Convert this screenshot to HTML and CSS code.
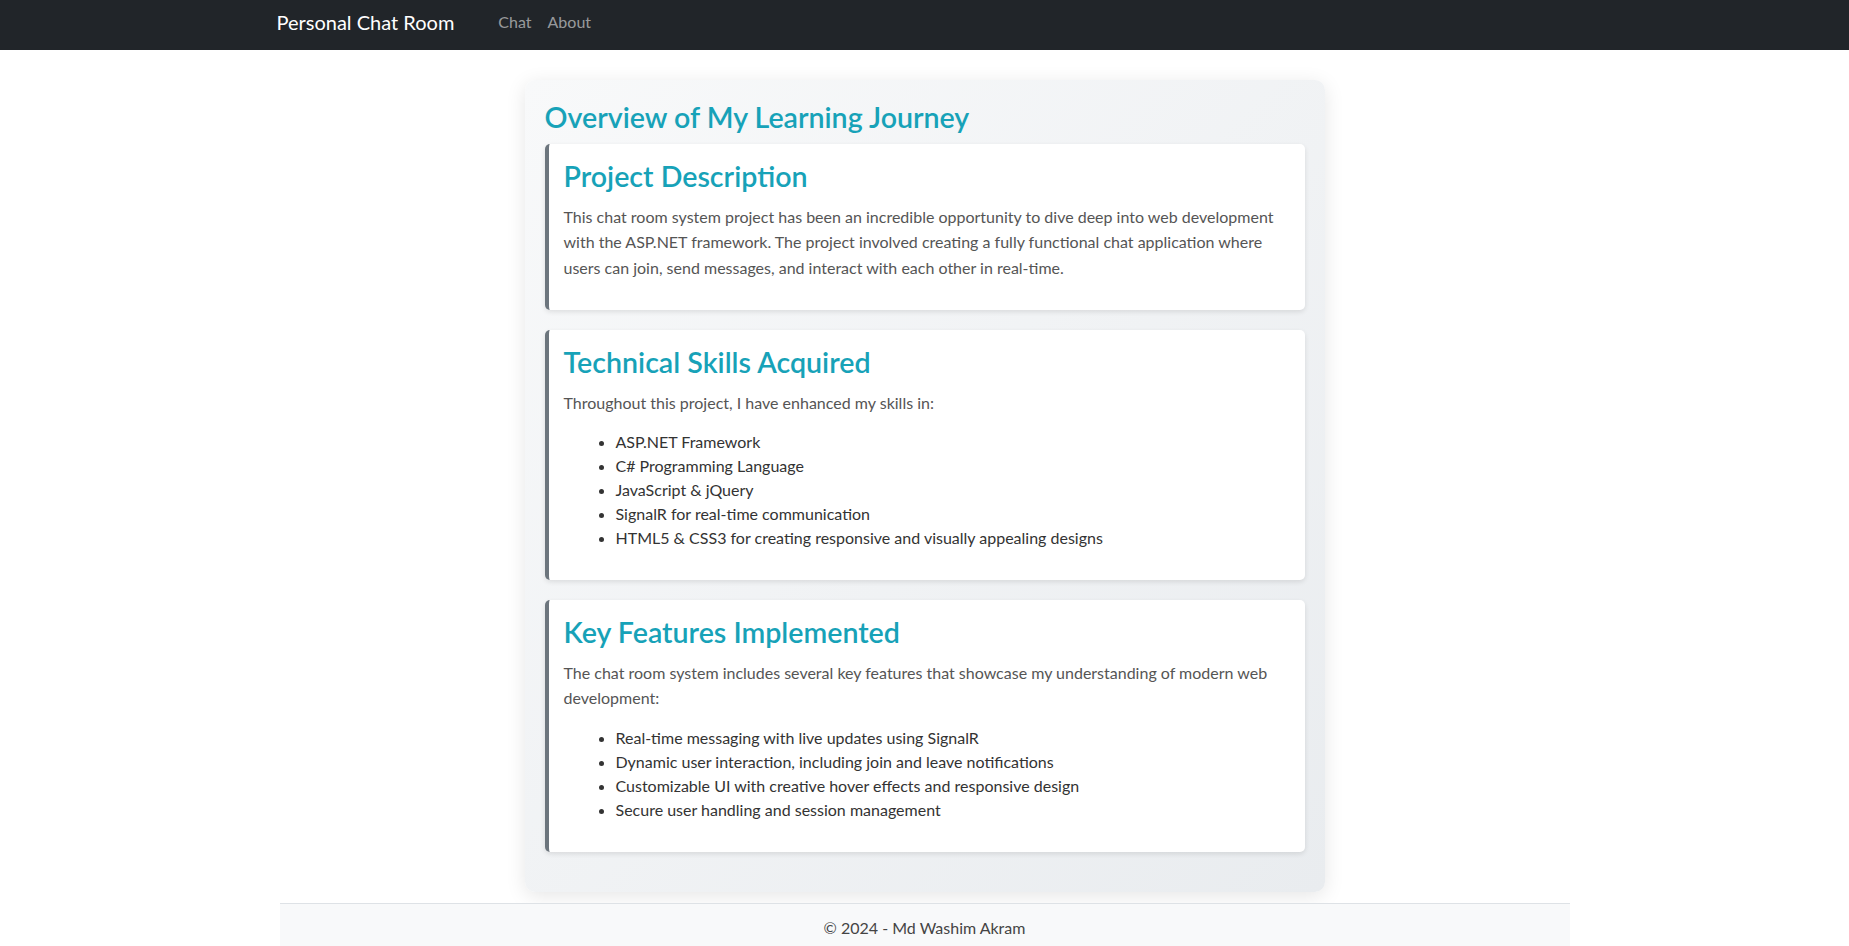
FILE: index.html
```html
<!DOCTYPE html>
<html lang="en">
<head>
<meta charset="utf-8">
<title>About - Personal Chat Room</title>
<link rel="stylesheet" href="styles.css">
</head>
<body>
<header class="navbar">
  <div class="nav-container">
    <a class="brand" href="#">Personal Chat Room</a>
    <nav class="nav-links">
      <a class="nav-link" href="#">Chat</a>
      <a class="nav-link" href="#">About</a>
    </nav>
  </div>
</header>

<main class="page">
  <div class="journey-card">
    <h2 class="journey-title">Overview of My Learning Journey</h2>

    <section class="journey-section">
      <h3 class="section-title">Project Description</h3>
      <p class="section-text">This chat room system project has been an incredible opportunity to dive deep into web development with the ASP.NET framework. The project involved creating a fully functional chat application where users can join, send messages, and interact with each other in real-time.</p>
    </section>

    <section class="journey-section">
      <h3 class="section-title">Technical Skills Acquired</h3>
      <p class="section-text">Throughout this project, I have enhanced my skills in:</p>
      <ul class="section-list">
        <li>ASP.NET Framework</li>
        <li>C# Programming Language</li>
        <li>JavaScript &amp; jQuery</li>
        <li>SignalR for real-time communication</li>
        <li>HTML5 &amp; CSS3 for creating responsive and visually appealing designs</li>
      </ul>
    </section>

    <section class="journey-section">
      <h3 class="section-title">Key Features Implemented</h3>
      <p class="section-text">The chat room system includes several key features that showcase my understanding of modern web development:</p>
      <ul class="section-list">
        <li>Real-time messaging with live updates using SignalR</li>
        <li>Dynamic user interaction, including join and leave notifications</li>
        <li>Customizable UI with creative hover effects and responsive design</li>
        <li>Secure user handling and session management</li>
      </ul>
    </section>
  </div>
</main>

<footer class="footer">
  <div class="footer-inner">&copy; 2024 - Md Washim Akram</div>
</footer>
</body>
</html>
```
FILE: styles.css
```css
* { box-sizing: border-box; }

html, body {
  margin: 0;
  padding: 0;
}

body {
  font-family: "Lato", "Liberation Sans", sans-serif;
  font-size: 16px;
  line-height: 1.5;
  color: #212529;
  background: #fff;
}

a { text-decoration: none; }

/* Navbar */
.navbar {
  background: #212529;
  height: 50px;
}

.nav-container {
  max-width: 1320px;
  margin: 0 auto;
  padding: 7px 12px 0;
  display: flex;
  align-items: center;
}

.brand {
  color: #fff;
  font-size: 20px;
  line-height: 30px;
  margin-right: 36px;
}

.nav-links {
  display: flex;
}

.nav-link {
  color: rgba(255, 255, 255, 0.55);
  font-size: 16px;
  line-height: 30px;
  padding: 0 8px;
}

/* Main */
.page {
  padding-top: 30px;
}

.journey-card {
  width: 800px;
  margin: 0 auto;
  padding: 20px;
  border-radius: 10px;
  background: linear-gradient(135deg, #f8f9fa 0%, #e9ecef 100%);
  box-shadow: 0 4px 20px rgba(0, 0, 0, 0.1);
}

.journey-title {
  margin: 0 0 10px;
  font-size: 28.6px;
  font-weight: 600;
  line-height: 1.2;
  color: #17a2b8;
}

.journey-section {
  background: #fff;
  border-left: 4px solid #6c757d;
  border-radius: 5px;
  padding: 15px;
  margin-bottom: 20px;
  box-shadow: 0 2px 5px rgba(0, 0, 0, 0.1);
}

.section-title {
  margin: 0 0 10px;
  font-size: 28.6px;
  font-weight: 600;
  line-height: 1.2;
  color: #17a2b8;
}

.section-text {
  margin: 0 0 15px;
  line-height: 1.6;
  color: #555;
}

.section-list {
  margin: 0 0 15px;
  padding-left: 52px;
  color: #333;
  line-height: 24px;
}

/* Footer */
.footer {
  margin-top: 11px;
}

.footer-inner {
  max-width: 1290px;
  margin: 0 auto;
  background: #f8f9fa;
  border-top: 1px solid #dee2e6;
  text-align: center;
  padding: 12px 0;
  line-height: 24px;
  color: #444;
}
```
